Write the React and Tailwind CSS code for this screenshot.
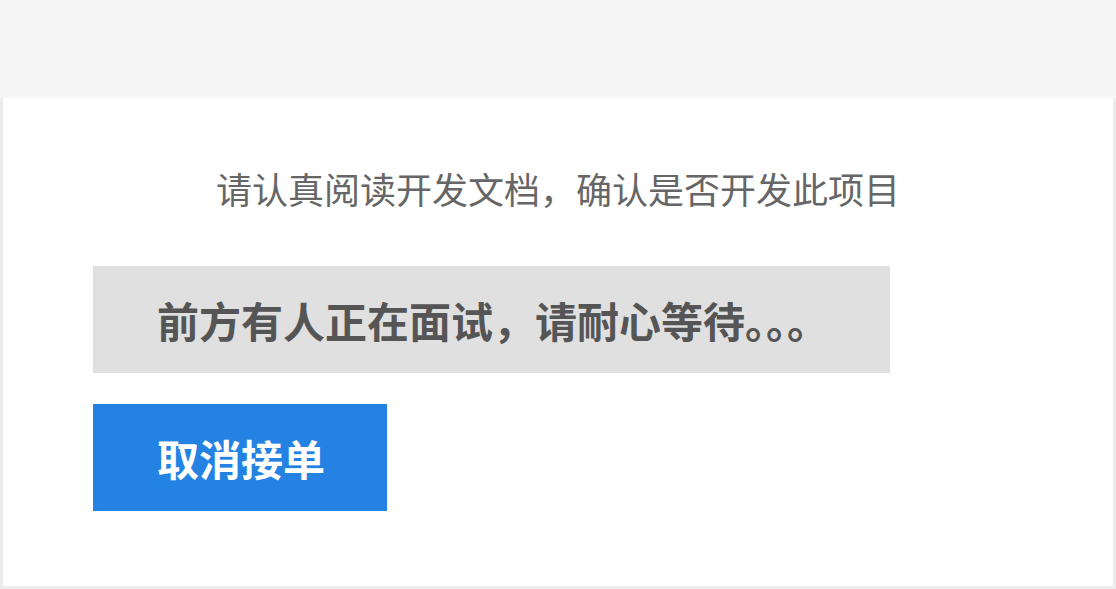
import React from 'react';

const font = { fontFamily: '"Noto Sans CJK SC", "Noto Sans", sans-serif' };

export default function App() {
  return (
    <div className="w-[1116px] h-[589px] flex flex-col bg-[#f5f5f5]" style={font}>
      {/* top strip */}
      <div className="h-[98px] shrink-0" />

      {/* card */}
      <div className="flex-1 border-x-[3px] border-b-[3px] border-[#ececec] bg-white flex flex-col">
        <p className="mt-[72px] text-center text-[36px] leading-[36px] text-[#666666]">
          请认真阅读开发文档，确认是否开发此项目
        </p>

        <div className="mt-[60px] ml-[90px] w-[797px] h-[107px] bg-[#e0e0e0] flex items-center pl-[64px]">
          <span className="text-[42px] leading-none font-bold text-[#555555]">
            前方有人正在面试，请耐心等待。。。
          </span>
        </div>

        <button className="mt-[31px] ml-[90px] w-[294px] h-[107px] bg-[#2382e2] flex items-center pl-[64px] text-white text-[42px] leading-none font-bold">
          取消接单
        </button>
      </div>
    </div>
  );
}
